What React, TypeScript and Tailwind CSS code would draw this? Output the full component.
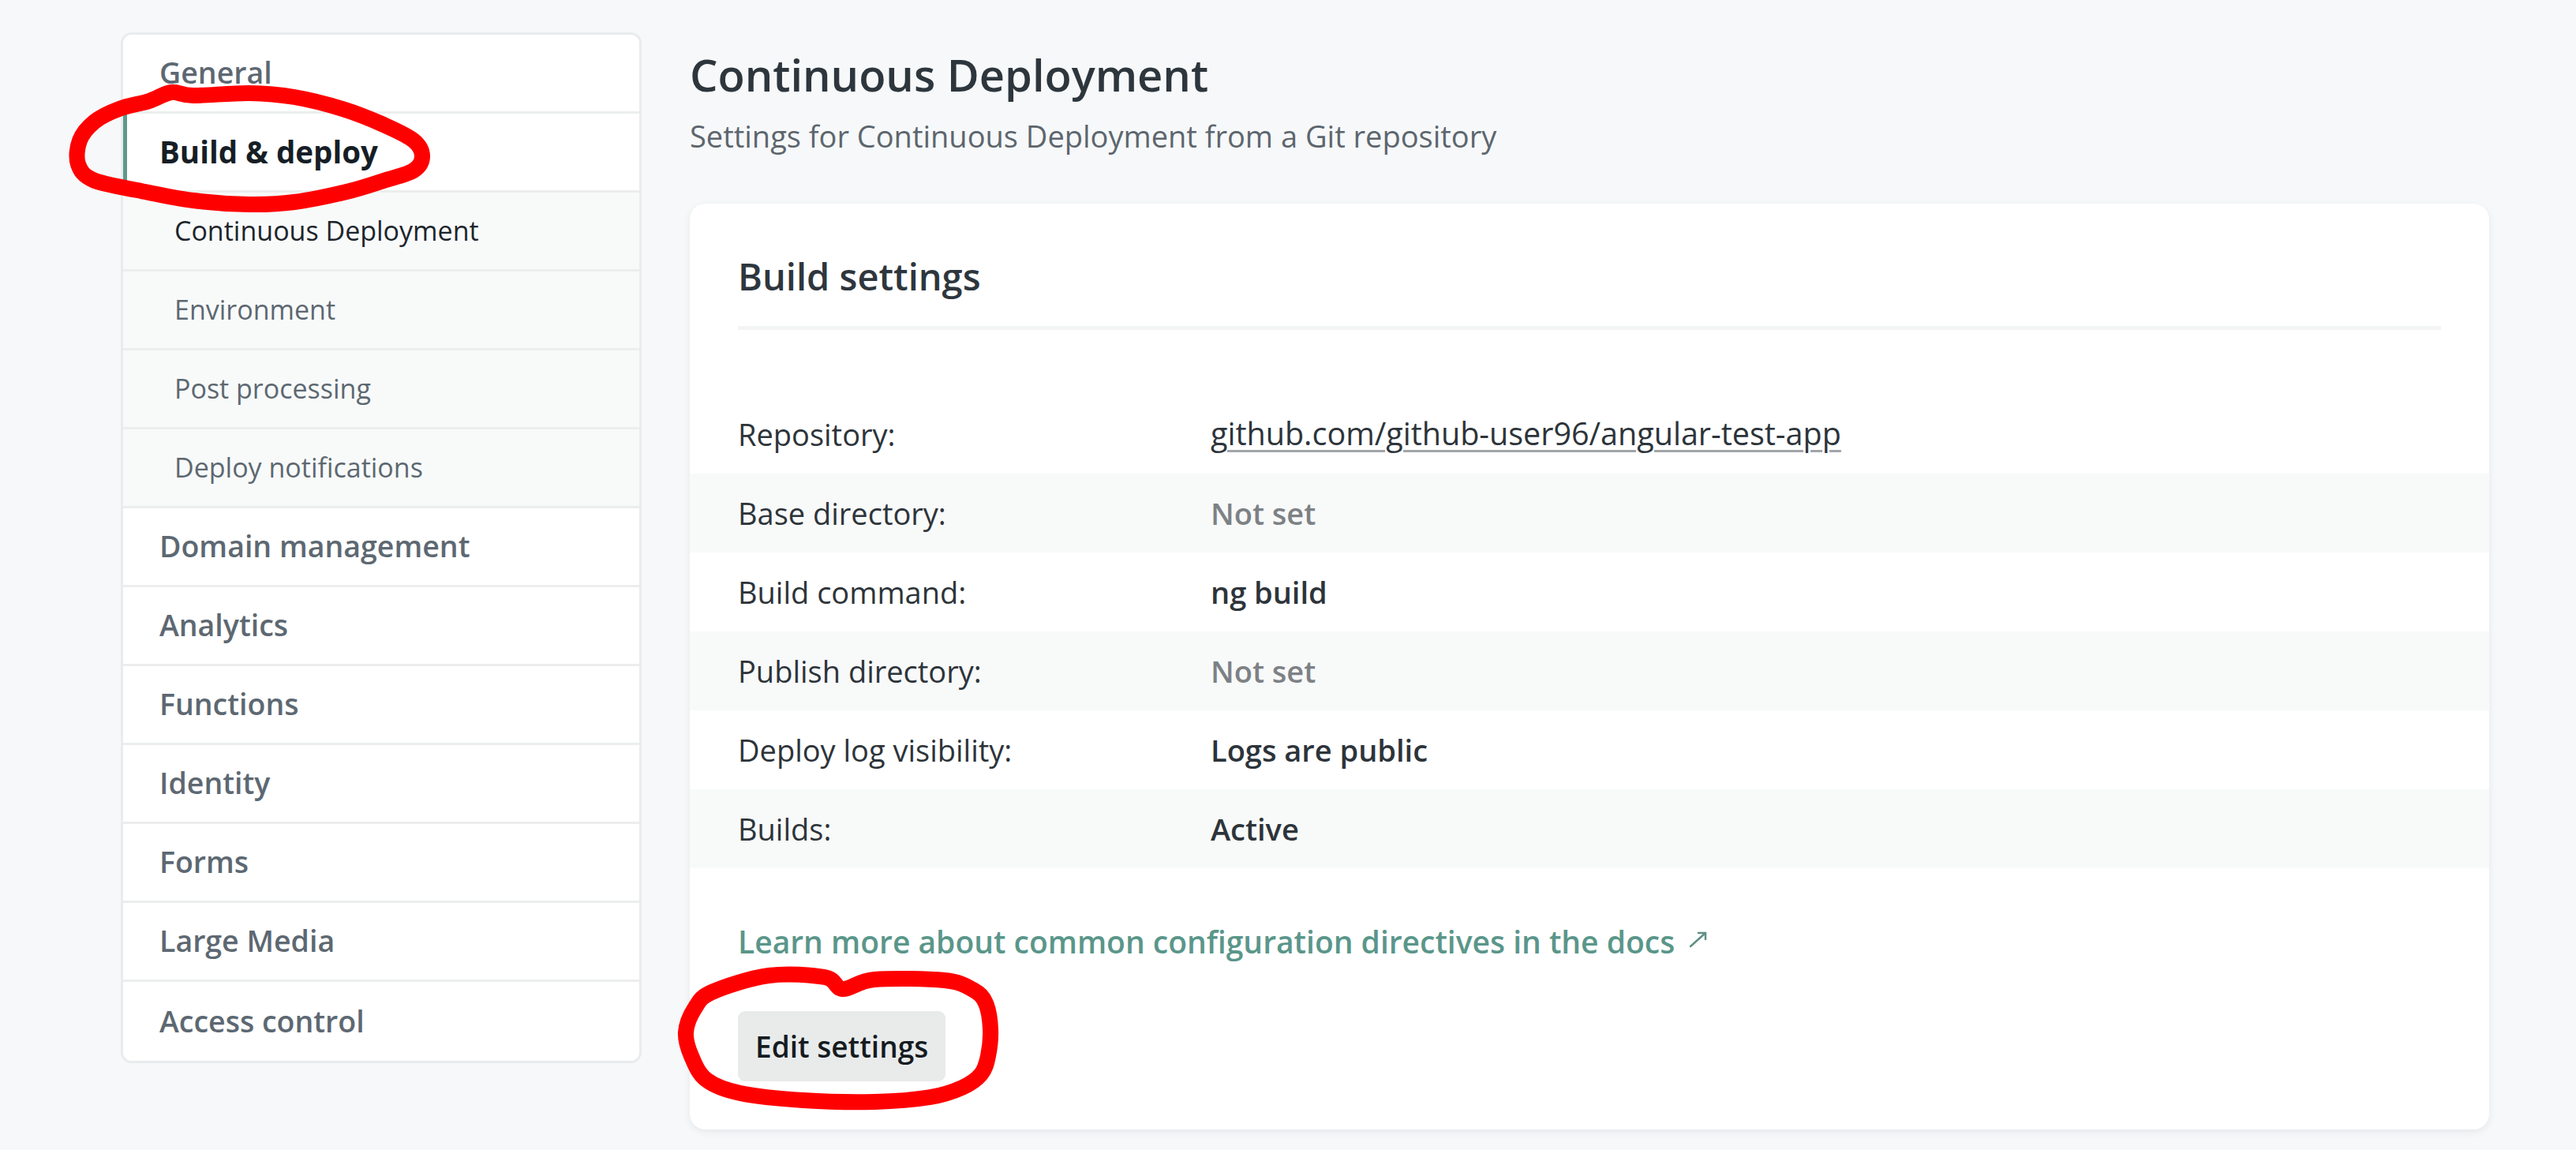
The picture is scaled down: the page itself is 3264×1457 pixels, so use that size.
import React from "react";

type Pt = [number, number];

function smooth(pts: Pt[]): string {
  const n = pts.length;
  let d = `M${pts[0][0]},${pts[0][1]}`;
  for (let i = 0; i < n; i++) {
    const p0 = pts[(i - 1 + n) % n];
    const p1 = pts[i];
    const p2 = pts[(i + 1) % n];
    const p3 = pts[(i + 2) % n];
    const c1x = p1[0] + (p2[0] - p0[0]) / 6;
    const c1y = p1[1] + (p2[1] - p0[1]) / 6;
    const c2x = p2[0] - (p3[0] - p1[0]) / 6;
    const c2y = p2[1] - (p3[1] - p1[1]) / 6;
    d += ` C${c1x.toFixed(1)},${c1y.toFixed(1)} ${c2x.toFixed(1)},${c2y.toFixed(1)} ${p2[0]},${p2[1]}`;
  }
  return d + "Z";
}

const ring1: Pt[] = [
  [217, 117], [245, 121], [316, 118], [373, 123], [434, 138], [486, 158], [524, 178], [535, 198],
  [524, 216], [486, 229], [439, 243], [373, 256], [316, 259], [245, 254], [174, 241], [118, 228],
  [99, 208], [101, 178], [120, 154], [151, 138], [189, 128],
];

const ring2: Pt[] = [
  [902, 1257], [974, 1236], [1045, 1238], [1068, 1253], [1108, 1241], [1197, 1242], [1233, 1254],
  [1249, 1271], [1255, 1304], [1252, 1338], [1243, 1361], [1219, 1378], [1179, 1390], [1108, 1396],
  [1018, 1394], [938, 1385], [895, 1368], [876, 1338], [869, 1308], [880, 1278],
];

type NavItem = { label: string; sub?: boolean; active?: boolean };

const nav: NavItem[] = [
  { label: "General" },
  { label: "Build & deploy", active: true },
  { label: "Continuous Deployment", sub: true, active: true },
  { label: "Environment", sub: true },
  { label: "Post processing", sub: true },
  { label: "Deploy notifications", sub: true },
  { label: "Domain management" },
  { label: "Analytics" },
  { label: "Functions" },
  { label: "Identity" },
  { label: "Forms" },
  { label: "Large Media" },
  { label: "Access control" },
];

type Row = { label: string; value: string; kind: "link" | "muted" | "strong" };

const rows: Row[] = [
  { label: "Repository:", value: "github.com/github-user96/angular-test-app", kind: "link" },
  { label: "Base directory:", value: "Not set", kind: "muted" },
  { label: "Build command:", value: "ng build", kind: "strong" },
  { label: "Publish directory:", value: "Not set", kind: "muted" },
  { label: "Deploy log visibility:", value: "Logs are public", kind: "strong" },
  { label: "Builds:", value: "Active", kind: "strong" },
];

function NavRow({ item, last }: { item: NavItem; last: boolean }) {
  const base = "h-[100px] flex items-center " + (last ? "" : "border-b-[3px] border-[#eceeee] ");
  if (item.sub) {
    return (
      <div className={base + "bg-[#f8fafa] pl-[65px]"}>
        <span className={item.active ? "text-[34px] font-medium text-[#1d252c]" : "text-[34px] text-[#5d6871]"}>
          {item.label}
        </span>
      </div>
    );
  }
  if (item.active) {
    return (
      <div className={base + "bg-white pl-[41px] border-l-[5px] border-l-[#5d998c]"}>
        <span className="text-[38.5px] font-bold text-[#161e26]">{item.label}</span>
      </div>
    );
  }
  return (
    <div className={base + "bg-white pl-[46px]"}>
      <span className="text-[37.5px] font-semibold text-[#5d6872]">{item.label}</span>
    </div>
  );
}

export default function App() {
  return (
    <div className="relative w-[3264px] h-[1457px] overflow-hidden bg-[#f6f8f9] font-['Open_Sans',sans-serif] flex items-start pl-[153px] gap-[61px]">
      <nav className="mt-[41px] w-[660px] shrink-0 bg-white border-[3px] border-[#e9ebec] rounded-[14px] overflow-hidden">
        {nav.map((item, i) => (
          <NavRow key={item.label} item={item} last={i === nav.length - 1} />
        ))}
      </nav>

      <main className="w-[2280px] shrink-0 pt-[57px]">
        <h1 className="text-[56px] leading-[74px] font-semibold text-[#2e363d]">Continuous Deployment</h1>
        <p className="mt-[15px] text-[38px] leading-[52px] text-[#5d666e]">
          Settings for Continuous Deployment from a Git repository
        </p>

        <section className="mt-[60px] bg-white rounded-[20px] shadow-[0_3px_10px_rgba(40,50,60,0.08)] pt-[62px] pb-[61px]">
          <div className="px-[61px]">
            <h2 className="text-[47px] leading-[60px] font-semibold text-[#2e363d]">Build settings</h2>
            <div className="mt-[33px] h-[5px] bg-[#f3f4f4]" />
          </div>

          <div className="mt-[82px]">
            {rows.map((r, i) => (
              <div
                key={r.label}
                className={"h-[100px] flex items-center px-[61px] " + (i % 2 === 1 ? "bg-[#f8f9f9]" : "bg-white")}
              >
                <div className="w-[599px] shrink-0 text-[38px] text-[#2d343a]">{r.label}</div>
                {r.kind === "link" && (
                  <a className="text-[39.5px] text-[#2d343a] underline decoration-[#a1a5a9] decoration-[3px] underline-offset-[6px]">
                    {r.value}
                  </a>
                )}
                {r.kind === "muted" && <div className="text-[38px] font-semibold text-[#7d8185]">{r.value}</div>}
                {r.kind === "strong" && <div className="text-[38px] font-semibold text-[#2d343a]">{r.value}</div>}
              </div>
            ))}
          </div>

          <div className="px-[61px]">
            <div className="mt-[68px] h-[50px] flex items-center gap-[18px]">
              <span className="text-[39px] font-semibold text-[#5a968a]">
                Learn more about common configuration directives in the docs
              </span>
              <svg width="24" height="22" viewBox="0 0 24 22" fill="none" className="mt-[-6px]">
                <path d="M2 20 L21 3" stroke="#5f8f86" strokeWidth="2.5" strokeLinecap="round" />
                <path d="M12 3 H21 V11" stroke="#5f8f86" strokeWidth="2.5" strokeLinecap="round" strokeLinejoin="round" />
              </svg>
            </div>

            <button className="mt-[63px] h-[89px] px-[22px] rounded-[9px] bg-[#e9ebeb] text-[37px] font-semibold text-[#151b21]">
              Edit settings
            </button>
          </div>
        </section>
      </main>

      <svg
        className="absolute inset-0 pointer-events-none"
        width="3264"
        height="1457"
        viewBox="0 0 3264 1457"
        fill="none"
      >
        <path d={smooth(ring1)} stroke="#ff0000" strokeWidth="20" strokeLinejoin="round" strokeLinecap="round" />
        <path d={smooth(ring2)} stroke="#ff0000" strokeWidth="20" strokeLinejoin="round" strokeLinecap="round" />
      </svg>
    </div>
  );
}
